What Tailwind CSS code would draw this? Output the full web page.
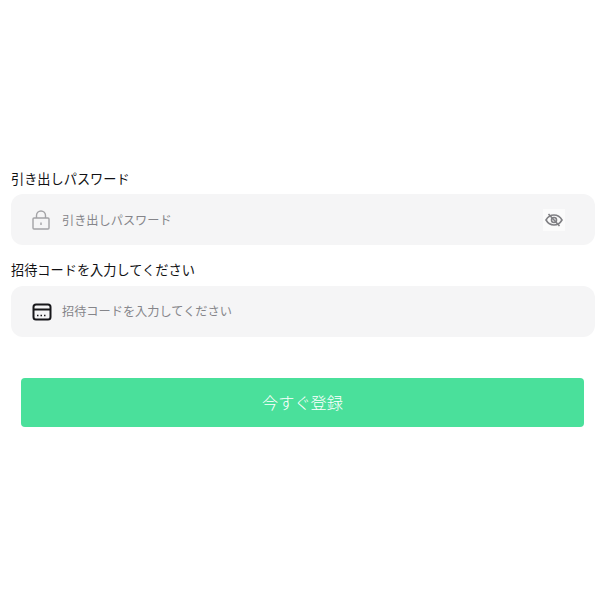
<!DOCTYPE html>
<html lang="ja">
<head>
    <meta charset="UTF-8">
    <title>登録</title>
    <script src="https://cdn.jsdelivr.net/npm/@tailwindcss/browser@4"></script>
</head>
<body class="bg-white w-[600px] h-[600px] overflow-hidden font-['Noto_Sans_CJK_JP','Noto_Sans',sans-serif]">
    <div class="pt-[170px] pl-[11px] pr-[5px]">
        <!-- password -->
        <label class="block h-[18px] leading-[18px] text-[13.2px] font-normal text-[#111114]">引き出しパスワード</label>
        <div class="mt-[6px] h-[51px] bg-[#f5f5f6] rounded-[12px] flex items-center pl-[21px] pr-[30px]">
            <svg class="w-[18px] h-[20px]" viewBox="0 0 18 20" fill="none" stroke="#a3a3a6" stroke-width="1.4">
                <rect x="1" y="8" width="16" height="11" rx="1"/>
                <path d="M4.500 8V5.500a4.500 4.500 0 0 1 9 0V8"/>
                <path d="M9 12.500v2.500"/>
            </svg>
            <span class="ml-[12px] pt-px text-[12.2px] text-[#85858a]">引き出しパスワード</span>
            <div class="ml-auto w-[22px] h-[22px] bg-white/60 flex items-center justify-center">
                <svg class="w-[18px] h-[14px]" viewBox="0 0 18 14" fill="none" stroke="#808084" stroke-width="1.600">
                    <path d="M1 7c2-3.500 4.800-5 8-5s6 1.500 8 5c-2 3.500-4.800 5-8 5s-6-1.500-8-5z"/>
                    <circle cx="9" cy="7" r="2.500"/>
                    <path d="M3.500 1l11 12"/>
                </svg>
            </div>
        </div>

        <!-- invite code -->
        <label class="block mt-[16px] h-[18px] leading-[18px] text-[13.2px] font-normal text-[#111114]">招待コードを入力してください</label>
        <div class="mt-[7px] h-[51px] bg-[#f5f5f6] rounded-[12px] flex items-center pl-[21px] pr-[30px]">
            <svg class="w-[20px] h-[18px]" viewBox="0 0 20 18" fill="none" stroke="#17171a" stroke-width="2">
                <rect x="1.500" y="1.500" width="17" height="15" rx="2.500"/>
                <path d="M1.500 6.500h17"/>
                <path d="M5 12.500h1.500M8.500 12.500h1.500M12 12.500h1.500" stroke-width="1.600"/>
            </svg>
            <span class="ml-[10px] text-[12.2px] text-[#85858a]">招待コードを入力してください</span>
        </div>
    </div>

    <div class="pl-[21px] pr-[16px] mt-[41px]">
        <button class="w-full h-[49px] pb-[1px] bg-[#4ae09b] rounded-[4px] text-white text-[16.200px] font-light">今すぐ登録</button>
    </div>
</body>
</html>
